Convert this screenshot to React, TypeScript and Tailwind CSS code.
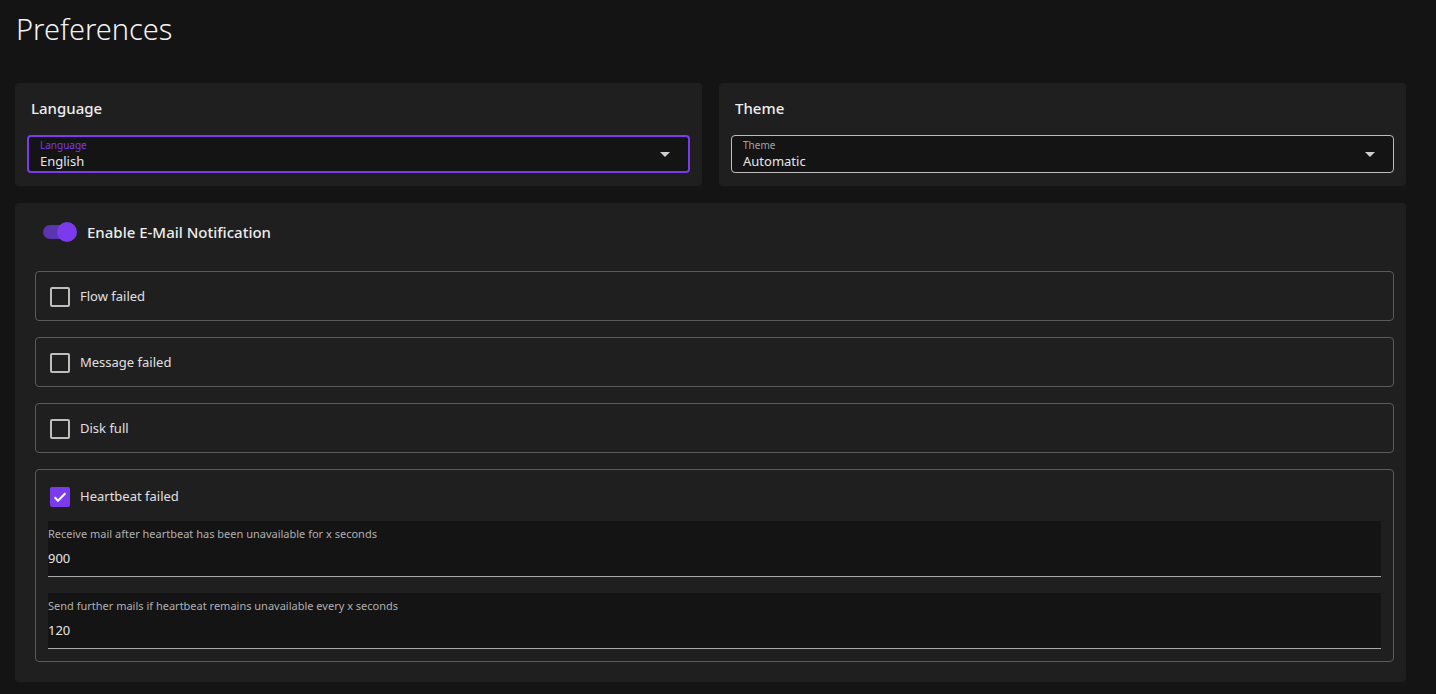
import { useState } from 'react'

const font = { fontFamily: '"Noto Sans", "Open Sans", sans-serif' }

function Caret() {
  return (
    <svg width="10" height="5" viewBox="0 0 10 5" className="fill-[#cfcfcf]">
      <path d="M0 0h10L5 5z" />
    </svg>
  )
}

function SelectField({ label, value, focused }: { label: string; value: string; focused?: boolean }) {
  return (
    <div
      className={`flex items-center h-[38px] rounded-[4px] bg-[#141414] pl-[11px] pr-[18px] ${
        focused ? 'border-2 border-[#7c3aed]' : 'border border-[#bdbdbd] pl-[11px]'
      }`}
    >
      <div className="flex-1 flex flex-col leading-none">
        <span className={`text-[10px] ${focused ? 'text-[#7c3aed]' : 'text-[#a3a3a3]'}`}>{label}</span>
        <span className="text-[13px] text-[#e6e6e6] mt-[5px]">{value}</span>
      </div>
      <Caret />
    </div>
  )
}

function Checkbox({ checked }: { checked: boolean }) {
  return checked ? (
    <span className="w-5 h-5 rounded-[2px] bg-[#7c3aed] flex items-center justify-center">
      <svg width="16" height="16" viewBox="0 0 24 24" fill="none" stroke="white" strokeWidth="3.2">
        <path d="M4 12.5l5 5L20 6.5" />
      </svg>
    </span>
  ) : (
    <span className="w-5 h-5 rounded-[2px] border-2 border-[#bdbdbd]" />
  )
}

function TextField({ label, value }: { label: string; value: string }) {
  return (
    <div className="h-14 bg-[#141414] border-b border-[#a8a8a8] flex flex-col pt-[7px] leading-none">
      <span className="text-[11px] text-[#b0b0b0]">{label}</span>
      <span className="text-[13px] text-[#e6e6e6] mt-[13px]">{value}</span>
    </div>
  )
}

export default function App() {
  const [checks, setChecks] = useState({ flow: false, message: false, disk: false, heartbeat: true })
  const rows: { key: keyof typeof checks; label: string }[] = [
    { key: 'flow', label: 'Flow failed' },
    { key: 'message', label: 'Message failed' },
    { key: 'disk', label: 'Disk full' },
  ]

  return (
    <div className="min-h-[694px] bg-[#141414] pl-[15px] pr-[30px] pt-[11px] text-white" style={font}>
      <h1 className="text-[29px] font-light leading-[36px] pl-px text-[#f2f2f2]">Preferences</h1>

      <div className="grid grid-cols-2 gap-[17px] mt-9">
        <div className="bg-[#1f1f1f] rounded-[4px] px-3 pt-[15px] pb-[13px]">
          <h2 className="text-[15px] font-medium text-[#ededed] leading-5 pl-1">Language</h2>
          <div className="mt-[17px]">
            <SelectField label="Language" value="English" focused />
          </div>
        </div>
        <div className="bg-[#1f1f1f] rounded-[4px] px-3 pt-[15px] pb-[13px]">
          <h2 className="text-[15px] font-medium text-[#ededed] leading-5 pl-1">Theme</h2>
          <div className="mt-[17px]">
            <SelectField label="Theme" value="Automatic" />
          </div>
        </div>
      </div>

      <div className="bg-[#1f1f1f] rounded-[4px] mt-[17px] pl-5 pr-3 pt-[15px] pb-5">
        <div className="flex items-center gap-3 pl-[8px] h-7">
          <span className="relative w-[32px] h-[14px] rounded-full bg-[#5b34b0]">
            <span className="absolute right-[-2px] top-[-3px] w-5 h-5 rounded-full bg-[#7c3aed]" />
          </span>
          <span className="text-[15px] font-medium text-[#ededed]">Enable E-Mail Notification</span>
        </div>

        <div className="flex flex-col gap-4 mt-[25px]">
          {rows.map(r => (
            <label
              key={r.key}
              onClick={() => setChecks(c => ({ ...c, [r.key]: !c[r.key] }))}
              className="h-[50px] border border-[#5a5a5a] rounded-[4px] flex items-center gap-[10px] pl-[14px] pt-[2px] cursor-pointer"
            >
              <Checkbox checked={checks[r.key]} />
              <span className="text-[13px] text-[#e0e0e0]">{r.label}</span>
            </label>
          ))}

          <div className="border border-[#5a5a5a] rounded-[4px] pl-3 pr-3 pb-[12px]">
            <label
              onClick={() => setChecks(c => ({ ...c, heartbeat: !c.heartbeat }))}
              className="h-[51px] flex items-center gap-[10px] pl-[2px] pt-[2px] cursor-pointer"
            >
              <Checkbox checked={checks.heartbeat} />
              <span className="text-[13px] text-[#e0e0e0]">Heartbeat failed</span>
            </label>
            <div className="flex flex-col gap-4">
              <TextField label="Receive mail after heartbeat has been unavailable for x seconds" value="900" />
              <TextField label="Send further mails if heartbeat remains unavailable every x seconds" value="120" />
            </div>
          </div>
        </div>
      </div>
    </div>
  )
}
